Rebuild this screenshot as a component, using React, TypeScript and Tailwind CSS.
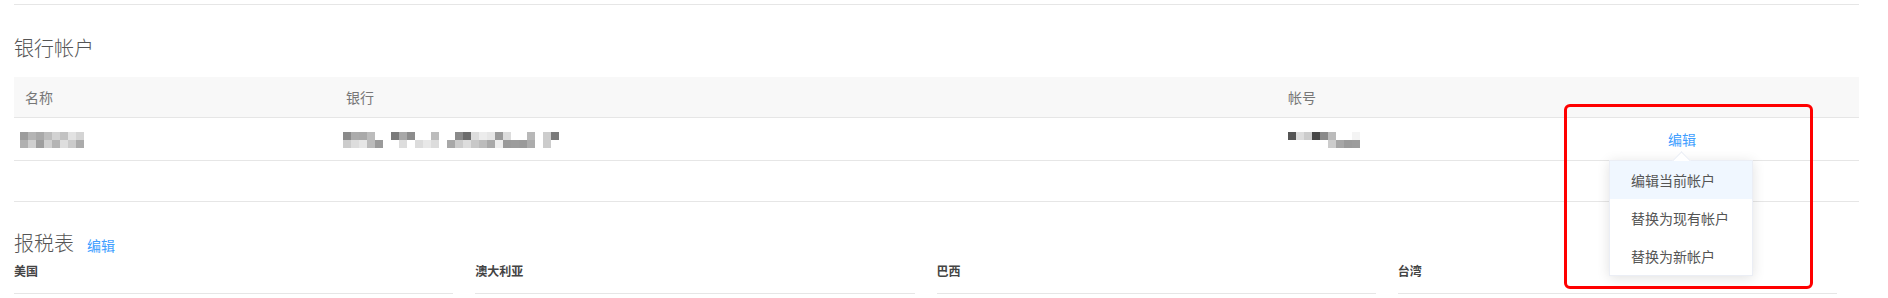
// pixelated (redacted) values, each cell 8x8
const nameBlur = [
  ["#9c9c9c", "#b4b4b4", "#a9a9a9", "#bdbdbd", "#d2d2d2", "#c2c2c2", "#e2e2e2", "#d4d4d4"],
  ["#b0b0b0", "#cfcfcf", "#9e9e9e", "#d0d0d0", "#b4b4b4", "#dedede", "#cbcbcb", "#ababab"],
];

const bankBlur = [
  ["#8a8a8a", "#ababab", "#a9a9a9", "#bcbcbc", "#fff", "#fff", "#7a7a7a", "#a8a8a8", "#8c8c8c", "#fff", "#fff", "#bcbcbc", "#fff", "#fff", "#8a8a8a", "#6c6c6c", "#dcdcdc", "#ececec", "#e6e6e6", "#9a9a9a", "#dcdcdc", "#fff", "#fff", "#b8b8b8", "#fff", "#cdcdcd", "#7a7a7a"],
  ["#cccccc", "#dddddd", "#e6e6e6", "#bbbbbb", "#9a9a9a", "#fff", "#fff", "#dddddd", "#fff", "#dcdcdc", "#e8e8e8", "#dcdcdc", "#fff", "#a8a8a8", "#cccccc", "#dddddd", "#c8c8c8", "#bcbcbc", "#a9a9a9", "#eeeeee", "#9a9a9a", "#9c9c9c", "#9a9a9a", "#acacac", "#fff", "#cccccc", "#fff"],
];

const accountBlur = [
  ["#555555", "#dddddd", "#cccccc", "#474747", "#8a8a8a", "#bbbbbb", "#fff", "#fff", "#f4f4f4"],
  ["#fff", "#fff", "#fff", "#fff", "#fff", "#cccccc", "#a6a6a6", "#9a9a9a", "#9c9c9c"],
];

const Mosaic = ({ cells }: { cells: string[][] }) => (
  <div className="flex flex-col">
    {cells.map((row, i) => (
      <div key={i} className="flex">
        {row.map((c, j) => (
          <div key={j} className="w-[8px] h-[8px]" style={{ backgroundColor: c }} />
        ))}
      </div>
    ))}
  </div>
);

const menuItems = ["编辑当前帐户", "替换为现有帐户", "替换为新帐户"];
const taxForms = ["美国", "澳大利亚", "巴西", "台湾"];

export default function App() {
  return (
    <div className="relative w-[1888px] h-[298px] overflow-hidden bg-white font-['Noto_Sans_CJK_SC',sans-serif]">
      <div className="ml-[14px] w-[1845px] pt-[4px]">
        <div className="border-t border-[#e6e6e6]" />

        {/* bank accounts */}
        <h2 className="mt-[29px] text-[20px] leading-[28px] font-light text-[#555]">银行帐户</h2>
        <div className="mt-[15px]">
          <div className="grid grid-cols-[321px_942px_228px_1fr] h-[41px] items-center bg-[#f8f8f8] border-b border-[#e6e6e6] text-[14px] text-[#777]">
            <div className="pl-[11px]">名称</div>
            <div className="pl-[11px]">银行</div>
            <div className="pl-[11px]">帐号</div>
            <div />
          </div>
          <div className="grid grid-cols-[321px_942px_228px_1fr] h-[43px] items-center border-b border-[#e6e6e6] text-[14px]">
            <div className="pl-[6px] pt-[2px]">
              <Mosaic cells={nameBlur} />
            </div>
            <div className="pl-[8px] pt-[2px]">
              <Mosaic cells={bankBlur} />
            </div>
            <div className="pl-[11px] pt-[2px]">
              <Mosaic cells={accountBlur} />
            </div>
            <div className="text-center">
              <button className="text-[#409eff]">编辑</button>
            </div>
          </div>
          <div className="h-[41px] border-b border-[#e6e6e6]" />
        </div>

        {/* tax forms */}
        <div className="mt-[27px] flex items-baseline">
          <h2 className="text-[20px] leading-[28px] font-light text-[#555]">报税表</h2>
          <button className="ml-[13px] text-[14px] text-[#409eff]">编辑</button>
        </div>
        <div className="mt-[6px] grid grid-cols-4">
          {taxForms.map((t) => (
            <div key={t} className="pr-[22px]">
              <div className="h-[31px] border-b border-[#e6e6e6] text-[12px] leading-[16px] font-semibold text-[#444]">
                {t}
              </div>
            </div>
          ))}
        </div>
      </div>

      {/* dropdown under the row's edit link */}
      <div className="absolute left-[1609px] top-[160px] w-[144px] bg-white border border-[#ebeef5] shadow-[0_2px_12px_0_rgba(0,0,0,0.12)]">
        <div className="absolute left-[65px] -top-[7px] w-[13px] h-[13px] rotate-45 bg-white border-l border-t border-[#ebeef5]" />
        <ul className="relative">
          {menuItems.map((m, i) => (
            <li
              key={m}
              className={`h-[38px] flex items-center pl-[21px] text-[14px] text-[#555] ${i === 0 ? "bg-[#f0f7ff]" : ""}`}
            >
              {m}
            </li>
          ))}
        </ul>
      </div>

      {/* red highlight box */}
      <div className="absolute left-[1564px] top-[104px] w-[249px] h-[185px] border-[3px] border-[#ff0000] rounded-[6px]" />
    </div>
  );
}
